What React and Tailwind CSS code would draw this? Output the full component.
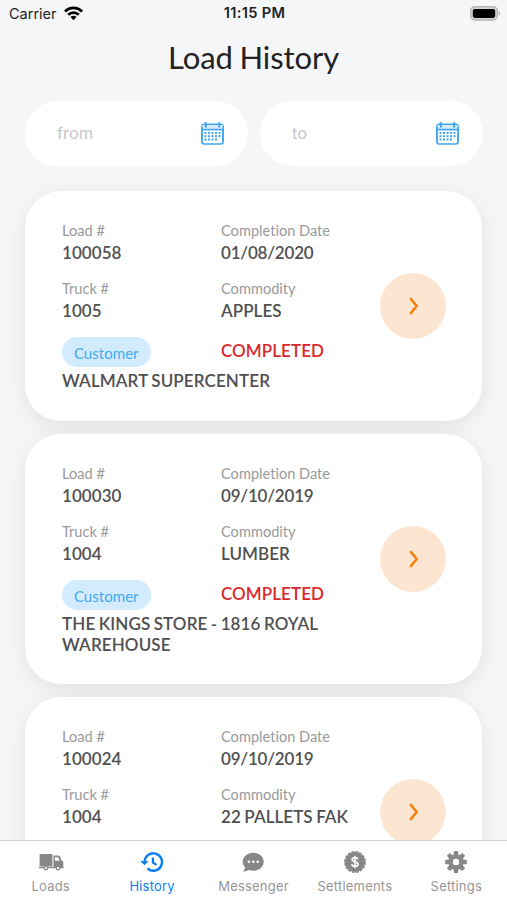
import React from 'react';

const loads = [
  { id: '100058', date: '01/08/2020', truck: '1005', commodity: 'APPLES', status: 'COMPLETED', customer: 'WALMART SUPERCENTER' },
  { id: '100030', date: '09/10/2019', truck: '1004', commodity: 'LUMBER', status: 'COMPLETED', customer: 'THE KINGS STORE - 1816 ROYAL WAREHOUSE' },
  { id: '100024', date: '09/10/2019', truck: '1004', commodity: '22 PALLETS FAK' },
];

function Wifi() {
  return (
    <svg className="ml-[7px] h-[15px] w-[19px]" viewBox="0 0 19 15" fill="none" stroke="#000" strokeWidth="2.8">
      <path d="M1 5.4a12.2 12.2 0 0 1 17 0" />
      <path d="M4.2 8.8a7.6 7.6 0 0 1 10.6 0" />
      <path d="M9.5 14.2 6.4 11.1a4.5 4.5 0 0 1 6.2 0z" fill="#000" stroke="none" />
    </svg>
  );
}

function Battery() {
  return (
    <svg className="h-[15px] w-[31px]" viewBox="0 0 31 15">
      <rect x="0.8" y="0.8" width="26.4" height="13.2" rx="4" fill="#d9d9da" stroke="#b4b4b5" strokeWidth="1.4" />
      <rect x="2.8" y="2.9" width="22.4" height="9" rx="1.8" fill="#000" />
      <path d="M28.6 5.2c2 .7 2 3.7 0 4.4z" fill="#adadae" />
    </svg>
  );
}

const calendarDots = [
  [8, 10.9], [11.5, 10.9], [15, 10.9], [18.5, 10.9],
  [4.5, 10.9], [4.5, 14.2], [8, 14.2], [11.5, 14.2], [15, 14.2], [18.5, 14.2],
  [4.5, 17.5], [8, 17.5], [11.5, 17.5], [15, 17.5],
];

function Calendar() {
  return (
    <svg className="h-[23px] w-[23px]" viewBox="0 0 23 23" fill="none" stroke="#41a5ee" strokeWidth="1.6">
      <rect x="0.9" y="2.4" width="21.2" height="19.6" rx="2.4" />
      <path d="M1 3.2h21v4.4H1z" fill="#d6ecfc" stroke="none" />
      <path d="M1 7.6h21" />
      <path d="M4.8 1v3.8M18.2 1v3.8" strokeWidth="2" strokeLinecap="round" />
      <path d="M.9 4.6v15M22.1 4.6v15" />
      {calendarDots.map(([x, y]) => (
        <rect key={x + '-' + y} x={x - 1} y={y - 1} width="2" height="2" fill="#41a5ee" stroke="none" />
      ))}
    </svg>
  );
}

function DateField({ label }) {
  return (
    <div className="flex h-[65px] w-[223px] items-center justify-between rounded-full bg-white pr-6 pl-8 text-[#c6c6c8]">
      <span className="font-[Inter,sans-serif] text-[16.4px]">{label}</span>
      <Calendar />
    </div>
  );
}

function Field({ label, value, tight }) {
  return (
    <div>
      <div className="text-[14.6px] leading-[18px] text-[#999a9b]">{label}</div>
      <div className={tight
        ? 'mt-[3px] text-[17px] leading-5 font-semibold tracking-[-0.2px] whitespace-nowrap text-[#505051]'
        : 'mt-[3px] text-[17px] leading-5 font-semibold tracking-[0.06px] whitespace-nowrap text-[#505051] [word-spacing:-0.8px]'}>{value}</div>
    </div>
  );
}

function LoadCard({ load }) {
  return (
    <article className="flex min-h-[230px] shrink-0 items-center rounded-[36px] bg-white pt-[31px] pr-[36px] pb-[28.6px] pl-[37px] shadow-[0_5px_22px_rgba(0,0,0,0.085)]">
      <div className="w-[318px] self-start">
        <div className="grid grid-cols-[159px_159px] gap-y-[17px]">
          <Field label="Load #" value={load.id} />
          <Field label="Completion Date" value={load.date} tight />
          <Field label="Truck #" value={load.truck} />
          <Field label="Commodity" value={load.commodity} />
          {load.customer && (
            <>
              <div className="-mt-[0.4px] flex">
                <span className="flex h-[30px] w-[88.5px] items-center justify-center rounded-full bg-[#d3ebfe] pt-px text-[15.1px] text-[#45aaf0]">Customer</span>
              </div>
              <div className="pt-[3px] text-[17px] leading-5 font-semibold tracking-[0.06px] text-[#d9282c]">{load.status}</div>
            </>
          )}
        </div>
        {load.customer && (
          <div className="mt-[4px] w-[290px] text-[17px] leading-[20.5px] font-semibold tracking-[0.12px] text-[#505051] [word-spacing:-1px]">{load.customer}</div>
        )}
      </div>
      <div className="mb-[3px] flex size-[66px] shrink-0 items-center justify-center rounded-full bg-[#fde6d1]">
        <svg className="ml-px h-[18px] w-[10px]" viewBox="0 0 10 18" fill="none" stroke="#f5800f" strokeWidth="2.5">
          <path d="M1.2 1.1 7.7 9l-6.5 7.9" />
        </svg>
      </div>
    </article>
  );
}

function TruckIcon() {
  return (
    <svg className="h-[24px] w-[26px]" viewBox="0 0 26 24">
      <path fill="#87878a" d="M1.6 4h12.8v12.6H1.6zM15.4 5.6h4.4c1.2 0 2 .5 2.4 1.5l1.3 3.3 1.1.6c.5.3.7.7.7 1.3v4.9h.5v1H1v-1.1h14.4zm1.5 1.7v3.5h4.7l-1.1-2.7c-.2-.5-.6-.8-1.1-.8z" />
      <circle cx="7.8" cy="18.2" r="1.7" fill="#fff" stroke="#87878a" strokeWidth="1.2" />
      <circle cx="20" cy="18.2" r="1.7" fill="#fff" stroke="#87878a" strokeWidth="1.2" />
    </svg>
  );
}

function HistoryIcon() {
  return (
    <svg className="h-[24px] w-[24px]" viewBox="0 0 24 24" fill="none" stroke="#087df3">
      <path d="M4.6 12.8V12a8.7 8.7 0 1 1 2.9 6.5" strokeWidth="2.4" />
      <path d="M.4 11h8.2L4.5 15.2z" fill="#087df3" stroke="none" />
      <path d="M12.9 7.4v5.3l3.6 2.2" strokeWidth="2.2" />
    </svg>
  );
}

function MessengerIcon() {
  return (
    <svg className="h-[24px] w-[24px]" viewBox="0 0 24 24">
      <path fill="#87878a" d="M12.2 2.7c5.8 0 10.5 4 10.5 9s-4.7 9-10.5 9c-1.6 0-3-.3-4.4-.8-1.5.9-3.6 1.5-5.6 1.5 1-1 1.9-2.5 2-3.8a8.3 8.3 0 0 1-2.5-5.9c0-5 4.7-9 10.5-9z" />
      <g fill="#fff">
        <circle cx="7.9" cy="11.7" r="1.3" />
        <circle cx="12.3" cy="11.7" r="1.3" />
        <circle cx="16.7" cy="11.7" r="1.3" />
      </g>
    </svg>
  );
}

function SettlementsIcon() {
  return (
    <svg className="h-[24px] w-[24px]" viewBox="0 0 24 24">
      <circle cx="12" cy="12" r="10" fill="#87878a" />
      <circle cx="12" cy="12" r="10.2" fill="none" stroke="#87878a" strokeWidth="1.5" strokeDasharray="3 1" />
      <path d="M15 9.4c-.3-1.1-1.4-1.8-3-1.8-1.8 0-2.9.8-2.9 2 0 3 6 1.5 6 4.6 0 1.3-1.3 2.1-3.1 2.1s-3-.8-3.3-2.1M12 5.8v12.4" fill="none" stroke="#fff" strokeWidth="1.6" />
    </svg>
  );
}

function GearIcon() {
  return (
    <svg className="h-[24px] w-[24px]" viewBox="0 0 24 24">
      <g fill="#87878a">
        {[0, 45, 90, 135].map((angle) => (
          <path key={angle} d="M10 1.1h4l.5 4v13.8l-.5 4h-4l-.5-4V5.1z" transform={`rotate(${angle} 12 12)`} />
        ))}
        <circle cx="12" cy="12" r="7.6" />
      </g>
      <circle cx="12" cy="12" r="3.2" fill="#fff" />
    </svg>
  );
}

const tabs = [
  { name: 'Loads', Icon: TruckIcon },
  { name: 'History', Icon: HistoryIcon, active: true },
  { name: 'Messenger', Icon: MessengerIcon },
  { name: 'Settlements', Icon: SettlementsIcon },
  { name: 'Settings', Icon: GearIcon },
];

export default function App() {
  return (
    <div className="flex h-[900px] w-[507px] flex-col overflow-hidden bg-[#f5f6f8] font-[Lato,sans-serif] [font-variant-ligatures:none]">
      <header className="grid h-[27px] shrink-0 grid-cols-3 items-center pr-[6px] pl-[9px] font-[Inter,sans-serif] text-[14.5px] text-[#222]">
        <div className="flex items-center"><span>Carrier</span><Wifi /></div>
        <div className="pt-px pr-px text-center text-[14.6px] font-semibold tracking-[0.35px] whitespace-nowrap">11:15 PM</div>
        <div className="flex justify-end"><Battery /></div>
      </header>
      <h1 className="mt-[9.5px] h-[40px] shrink-0 text-center text-[31px] leading-[40px] tracking-[-0.1px] text-[#222] [word-spacing:-1px]">Load History</h1>
      <div className="mt-[24.5px] flex shrink-0 gap-3 pl-[25px]">
        <DateField label="from" />
        <DateField label="to" />
      </div>
      <main className="flex min-h-0 flex-1 flex-col gap-[13px] overflow-hidden pt-[24.8px] pr-[25px] pl-[25px]">
        {loads.map((load) => <LoadCard key={load.id} load={load} />)}
      </main>
      <nav className="grid h-[60px] shrink-0 grid-cols-5 border-t border-[#d5d5d6] bg-white pt-[9px] font-[Inter,sans-serif]">
        {tabs.map(({ name, Icon, active }) => (
          <div key={name} className={active ? 'flex flex-col items-center text-[#087df3]' : 'flex flex-col items-center text-[#969698]'}>
            <Icon />
            <span className="mt-[3.6px] text-[13px] leading-[17px] tracking-[0.2px]">{name}</span>
          </div>
        ))}
      </nav>
    </div>
  );
}
